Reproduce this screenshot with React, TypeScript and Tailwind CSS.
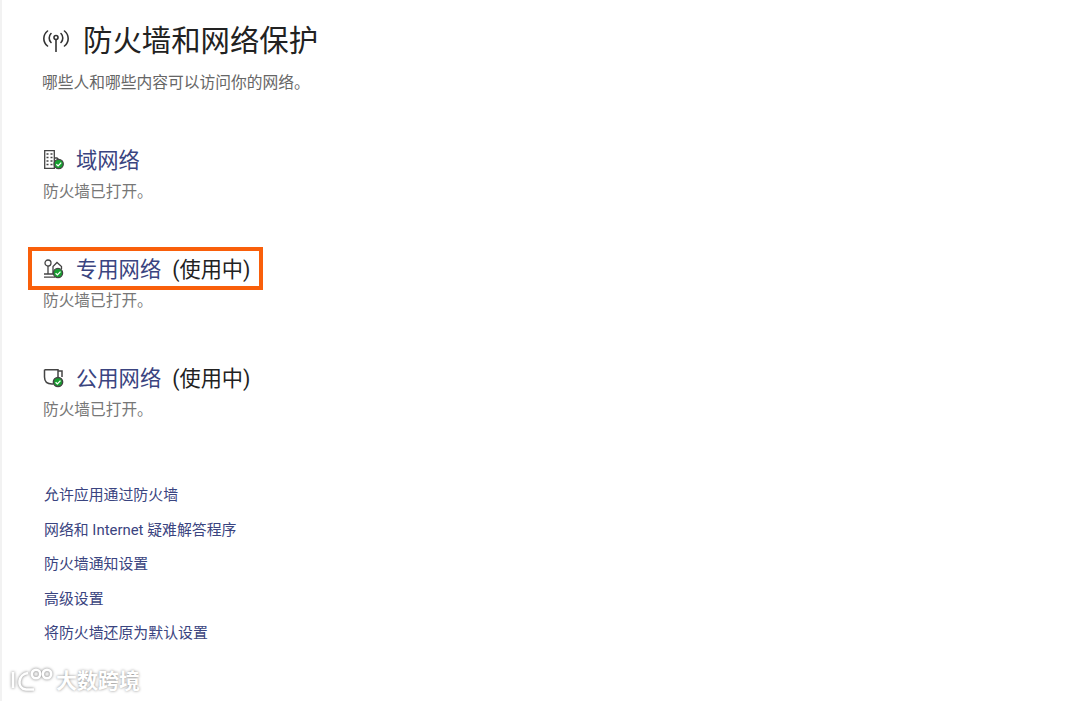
const cjk = "font-['Roboto','Noto_Sans_CJK_SC',sans-serif]";

function Check({ cx = 15 }: { cx?: number }) {
  return (
    <>
      <circle cx={cx} cy="15" r="4.6" fill="#16a02f" />
      <path d={`M${cx - 2.4} 15.2l1.8 1.7 3.1-3.3`} fill="none" stroke="#fff" strokeWidth="1.3" />
    </>
  );
}

function DomainIcon() {
  return (
    <svg viewBox="0 0 22 22" className="h-[22px] w-[22px]" fill="none" stroke="#444" strokeWidth="1.3">
      <path d="M1.7 19.3V1.7H11.3V19.3M1 19.3H12M11.3 9H14L16 11" />
      <path d="M3.5 5h2M7.5 5h2M3.5 8.5h2M7.5 8.5h2M3.5 12h2M7.5 12h2M3.5 15.5h2M7.5 15.5h2" strokeWidth="1.6" />
      <Check cx={15.7} />
    </svg>
  );
}

function PrivateIcon() {
  return (
    <svg viewBox="0 0 22 22" className="h-[22px] w-[22px]" fill="none" stroke="#444" strokeWidth="1.3">
      <circle cx="5" cy="5" r="3" />
      <path d="M5 8V16M10 16V8.5L14 4.5 18.5 8.5V11" />
      <path d="M1 16H12M1 19.2H12" />
      <Check />
    </svg>
  );
}

function PublicIcon() {
  return (
    <svg viewBox="0 0 22 22" className="h-[22px] w-[22px]" fill="none" stroke="#444" strokeWidth="1.5">
      <path d="M1.5 2.7H15V10M1.5 2.7V10C1.5 14.5 4.5 17 9 17H10.5M15 4H19V10" />
      <Check />
    </svg>
  );
}

function Network({
  icon,
  name,
  active,
  highlight,
}: {
  icon: React.ReactNode;
  name: string;
  active?: boolean;
  highlight?: boolean;
}) {
  return (
    <section className="relative h-[109px]">
      {highlight && (
        <div className="absolute left-[-15px] top-[-7px] h-[43px] w-[235px] border-[4px] border-[#f95f0a]" />
      )}
      <div className="flex h-[30px] items-center">
        <div className="h-[22px] w-[33px] shrink-0">{icon}</div>
        <span className="pt-[1px] text-[21.3px] leading-none text-[#3a4480]">{name}</span>
        {active && <span className="ml-[11px] pt-[1px] text-[21.2px] leading-none text-[#222]">(使用中)</span>}
      </div>
      <p className="mt-[7px] text-[15.7px] leading-[20px] text-[#777]">防火墙已打开。</p>
    </section>
  );
}

const links = ["允许应用通过防火墙", "网络和 Internet 疑难解答程序", "防火墙通知设置", "高级设置", "将防火墙还原为默认设置"];

export default function App() {
  return (
    <div className={`relative h-[701px] w-[1080px] overflow-hidden border-l-2 border-[#f2f2f2] bg-white pl-[41px] pt-[22px] ${cjk}`}>
      <header className="flex h-[38px] items-center">
        <svg viewBox="0 0 26 22" className="h-[22px] w-[26px]" fill="none" stroke="#333" strokeWidth="1.6" strokeLinecap="round">
          <path d="M4.5 1C-.4 5 -.4 12 4.5 16M21.5 1C26.4 5 26.4 12 21.5 16M8 3.5C5.6 6 5.6 10 8 12.5M18 3.5C20.4 6 20.4 10 18 12.5" />
          <circle cx="13" cy="7.5" r="2" />
          <path d="M13 9.5V21.5" />
        </svg>
        <h1 className="ml-[14px] pt-[2px] text-[29.4px] leading-none text-[#222]">防火墙和网络保护</h1>
      </header>
      <p className="ml-[-1px] mt-[13px] text-[15.75px] leading-[20px] text-[#666]">哪些人和哪些内容可以访问你的网络。</p>
      <div className="mt-[52px]">
        <Network icon={<DomainIcon />} name="域网络" />
        <Network icon={<PrivateIcon />} name="专用网络" active highlight />
        <Network icon={<PublicIcon />} name="公用网络" active />
      </div>
      <nav className="mt-[13px] flex flex-col gap-[14.5px] pl-[1px]">
        {links.map((link) => (
          <a key={link} className="text-[14.9px] leading-[20px] text-[#3a4480]">
            {link}
          </a>
        ))}
      </nav>
      <div className="absolute bottom-[9px] left-[7px] flex items-center gap-[3px] text-white [text-shadow:0_0_3px_#888]">
        <svg viewBox="0 0 44 24" className="h-[24px] w-[44px]" fill="none" stroke="#fff" strokeWidth="2.6" style={{ filter: "drop-shadow(0 0 1.5px #777)" }}>
          <path d="M4 4V20M19 5C9 6 7 20 17 21.5H25" />
          <circle cx="27" cy="6" r="4.2" />
          <circle cx="38" cy="6" r="4.2" />
        </svg>
        <span className="pt-[2px] text-[21px] font-bold leading-none">大数跨境</span>
      </div>
    </div>
  );
}
